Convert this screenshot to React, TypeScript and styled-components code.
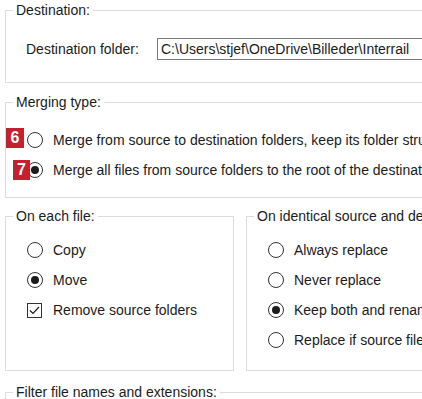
import styled, { createGlobalStyle } from "styled-components";

const GlobalStyle = createGlobalStyle`
  body {
    margin: 0;
    background: #fff;
    font-family: "Liberation Sans", Arial, sans-serif;
    color: #1b1b1b;
  }
`;

const Page = styled.div`
  width: 422px;
  height: 399px;
  overflow: hidden;
  padding-top: 2px;
  box-sizing: border-box;
  font-size: 14px;
`;

const Group = styled.fieldset<{ $width?: number; $gap?: number }>`
  margin: ${({ $gap = 0 }) => `${$gap}px 0 0 5px`};
  padding: 0;
  border: 1px solid #dcdcdc;
  min-width: 0;
  width: ${({ $width }) => ($width ? `${$width}px` : "480px")};
  flex-shrink: 0;
  box-sizing: border-box;
`;

const Title = styled.legend`
  margin-left: 7px;
  padding: 0 3px;
  line-height: 16px;
  white-space: nowrap;
`;

const Body = styled.div<{ $top: number; $bottom: number }>`
  display: flex;
  flex-direction: column;
  gap: 10px;
  padding: ${({ $top, $bottom }) => `${$top}px 0 ${$bottom}px 21px`};
`;

const FolderRow = styled.div`
  display: flex;
  align-items: center;
  height: 22px;
  padding: 20px 0 22px 20px;
`;

const FolderLabel = styled.span`
  width: 131px;
  flex-shrink: 0;
`;

const PathBox = styled.div`
  flex: 1;
  height: 22px;
  box-sizing: border-box;
  border: 1px solid #7a7a7a;
  padding: 0 3px;
  line-height: 20px;
  white-space: nowrap;
`;

const Option = styled.div`
  position: relative;
  display: flex;
  align-items: center;
  gap: 10px;
  height: 20px;
  white-space: nowrap;
`;

const Radio = styled.span<{ $checked?: boolean }>`
  position: relative;
  width: 16px;
  height: 16px;
  flex-shrink: 0;
  box-sizing: border-box;
  border: 1px solid #333;
  border-radius: 50%;
  background: #fff;

  &::after {
    content: "";
    display: ${({ $checked }) => ($checked ? "block" : "none")};
    position: absolute;
    left: 3px;
    top: 3px;
    width: 8px;
    height: 8px;
    border-radius: 50%;
    background: #1b1b1b;
  }
`;

const Check = styled.span`
  display: flex;
  align-items: center;
  justify-content: center;
  width: 15px;
  height: 15px;
  margin-right: 1px;
  flex-shrink: 0;
  box-sizing: border-box;
  border: 1px solid #333;
`;

const Badge = styled.span<{ $left: number; $top: number; $width: number }>`
  position: absolute;
  left: ${({ $left }) => $left}px;
  top: ${({ $top }) => $top}px;
  width: ${({ $width }) => $width}px;
  height: 20px;
  display: flex;
  align-items: center;
  justify-content: center;
  background: #c4202e;
  color: #fff;
  font-weight: bold;
  font-size: 16px;
`;

const Columns = styled.div`
  display: flex;
  gap: 12px;
  margin-top: 10px;
`;

const RadioOption = ({ label, checked }: { label: string; checked?: boolean }) => (
  <Option>
    <Radio $checked={checked} />
    <span>{label}</span>
  </Option>
);

export default function App() {
  return (
    <Page>
      <GlobalStyle />

      <Group>
        <Title>Destination:</Title>
        <FolderRow>
          <FolderLabel>Destination folder:</FolderLabel>
          <PathBox>C:\Users\stjef\OneDrive\Billeder\Interrail</PathBox>
        </FolderRow>
      </Group>

      <Group $gap={11}>
        <Title>Merging type:</Title>
        <Body $top={20} $bottom={17}>
          <Option>
            <Badge $left={-21} $top={-2} $width={18}>6</Badge>
            <Radio />
            <span>Merge from source to destination folders, keep its folder structure</span>
          </Option>
          <Option>
            <Radio $checked />
            <Badge $left={-14} $top={0} $width={17}>7</Badge>
            <span>Merge all files from source folders to the root of the destination folder</span>
          </Option>
        </Body>
      </Group>

      <Columns>
        <Group $width={229}>
          <Title>On each file:</Title>
          <Body $top={16} $bottom={20}>
            <RadioOption label="Copy" />
            <RadioOption label="Move" checked />
            <Option>
              <Check>
                <svg width="11" height="9" viewBox="0 0 11 9">
                  <path d="M1 4.5 L4 7.5 L10 1" fill="none" stroke="#1b1b1b" strokeWidth="1.2" />
                </svg>
              </Check>
              <span>Remove source folders</span>
            </Option>
          </Body>
        </Group>
        <Group style={{ marginLeft: 0 }}>
          <Title>On identical source and destination file names:</Title>
          <Body $top={16} $bottom={20}>
            <RadioOption label="Always replace" />
            <RadioOption label="Never replace" />
            <RadioOption label="Keep both and rename" checked />
            <RadioOption label="Replace if source file is newer" />
          </Body>
        </Group>
      </Columns>

      <Group $gap={13}>
        <Title>Filter file names and extensions:</Title>
        <Body $top={16} $bottom={20}>
          <span />
        </Body>
      </Group>
    </Page>
  );
}
